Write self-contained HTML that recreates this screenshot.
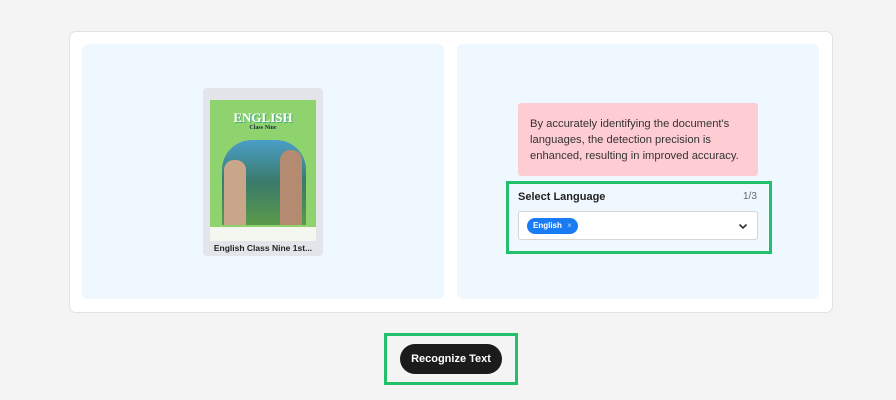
<!DOCTYPE html>
<html><head><style>
*{box-sizing:border-box;margin:0;padding:0}
body{width:896px;height:400px;background:#f4f4f4;font-family:"Liberation Sans",sans-serif;position:relative;overflow:hidden}
.card{position:absolute;left:69px;top:31px;width:764px;height:282px;background:#fff;border:1px solid #e2e2e2;border-radius:7px}
.panel{position:absolute;top:44px;width:362px;height:255px;background:#eff7ff;border-radius:6px}
.book{position:absolute;left:203px;top:88px;width:120px;height:168px;background:#e3e5ea;border-radius:4px}
.cover{position:absolute;left:7px;top:12px;width:106px;height:141px;background:#8fd36f;overflow:hidden}
.cap{position:absolute;left:0;right:0;top:155px;text-align:center;font-size:8.5px;font-weight:bold;color:#222}
.pink{position:absolute;left:518px;top:103px;width:240px;height:73px;background:#fecdd3;border-radius:3px;padding:13px 12px;font-size:11.2px;line-height:16px;color:#333}
.gbox{position:absolute;border:3px solid #22c06a}
.lbl{position:absolute;left:518px;top:191px;font-size:11px;font-weight:bold;color:#222}
.cnt{position:absolute;left:743px;top:191px;font-size:10px;color:#666}
.sel{position:absolute;left:518px;top:211px;width:240px;height:29px;background:#fff;border:1px solid #d6d6d6;border-radius:3px}
.chip{position:absolute;left:8px;top:6px;width:51px;height:16px;background:#1a7cf5;border-radius:8px;color:#fff;font-size:8px;font-weight:bold;line-height:16px;padding-left:6px}
.btn{position:absolute;left:400px;top:344px;width:102px;height:30px;background:#1b1b1b;border-radius:15px;color:#fff;font-size:11px;font-weight:bold;text-align:center;line-height:30px}
</style></head><body>
<div class="card"></div>
<div class="panel" style="left:82px"></div>
<div class="panel" style="left:457px"></div>
<div class="book">
 <div class="cover">
  <div style="position:absolute;top:10px;width:100%;text-align:center;font-family:'Liberation Serif',serif;font-weight:bold;font-size:13px;color:#fff;text-shadow:1px 1px 0 #4a7">ENGLISH</div>
  <div style="position:absolute;top:25px;width:100%;text-align:center;font-family:'Liberation Serif',serif;font-weight:bold;font-size:6px;color:#234">Class Nine</div>
  <div style="position:absolute;left:12px;top:40px;width:84px;height:85px;background:linear-gradient(#4a9ec8,#3a7a6a 50%,#5a9a4a);border-radius:30px 30px 0 0"></div>
  <div style="position:absolute;left:14px;top:60px;width:22px;height:65px;background:#c9a58a;border-radius:10px 10px 0 0"></div>
  <div style="position:absolute;left:70px;top:50px;width:22px;height:75px;background:#b48a70;border-radius:10px 10px 0 0"></div>
  <div style="position:absolute;left:0;top:127px;width:106px;height:14px;background:#f4f6f0"></div>
 </div>
 <div class="cap">English Class Nine 1st...</div>
</div>
<div class="pink">By accurately identifying the document's languages, the detection precision is enhanced, resulting in improved accuracy.</div>
<div class="gbox" style="left:506px;top:181px;width:266px;height:73px"></div>
<div class="lbl">Select Language</div>
<div class="cnt">1/3</div>
<div class="sel"><div class="chip">English <span style="opacity:.7;font-weight:normal;margin-left:3px">×</span></div>
<svg style="position:absolute;right:9px;top:11px" width="10" height="7" viewBox="0 0 10 7"><path d="M1.5 1.5L5 5l3.5-3.5" stroke="#333" stroke-width="1.6" fill="none"/></svg></div>
<div class="gbox" style="left:384px;top:333px;width:134px;height:52px"></div>
<div class="btn">Recognize Text</div>
</body></html>
